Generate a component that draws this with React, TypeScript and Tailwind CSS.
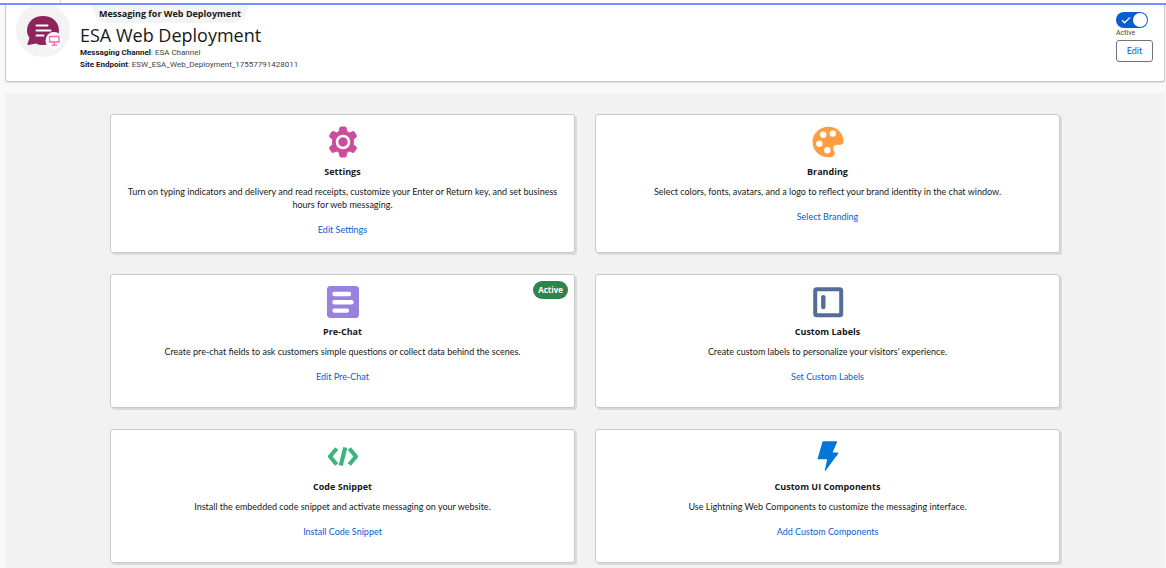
import { useState, type ReactNode } from "react";

type Card = {
  title: string;
  text: string;
  action: string;
  icon: ReactNode;
  active?: boolean;
};

const SettingsIcon = () => (
  <svg viewBox="0 0 32 32" className="size-8" aria-hidden="true">
    <path
      d="M14 1h4q1 0 1.200 1l.6 3.600q1.400.5 2.600 1.300l3.400-1.300q1-.3 1.500.5l2 3.400q.5.900-.3 1.600L26.200 13.400q.3 1.300.3 2.600t-.3 2.600l2.800 2.300q.8.700.3 1.600l-2 3.400q-.5.800-1.500.5l-3.400-1.300q-1.200.8-2.600 1.300L19.200 30q-.2 1-1.200 1h-4q-1 0-1.200-1l-.6-3.600q-1.400-.5-2.600-1.300l-3.400 1.300q-1 .3-1.500-.5l-2-3.400q-.5-.9.3-1.600l2.800-2.300q-.3-1.300-.3-2.600t.3-2.600L3 11.100q-.8-.7-.3-1.600l2-3.400q.5-.8 1.500-.5l3.400 1.300q1.200-.8 2.600-1.300L12.800 2q.2-1 1.200-1z"
      fill="#cb4d9b"
      stroke="#cb4d9b"
    />
    <circle cx="16" cy="16" r="6" fill="#cb4d9b" stroke="#fff" strokeWidth="2.600" />
  </svg>
);

const PaletteIcon = () => (
  <svg viewBox="0 0 32 32" className="size-8" aria-hidden="true">
    <path
      d="M16.500.7C7.500.7.5 7.500.5 16s7 15.300 16 15.300c3.500 0 6.200-1.300 6.200-3.900 0-2-1.500-3-1.500-5.100 0-2.300 1.700-3.600 4-3.600h3.300c2 0 3-1.200 3-3.200C31.500 7.300 25 .7 16.500.7z"
      fill="#ff9d40"
    />
    <g fill="#fff">
      <circle cx="11.200" cy="8.800" r="3.200" />
      <circle cx="20.800" cy="7.600" r="3.200" />
      <circle cx="7.300" cy="17.800" r="3.200" />
      <circle cx="15.300" cy="24.300" r="3.200" />
    </g>
  </svg>
);

const FormIcon = () => (
  <svg viewBox="0 0 32 32" className="size-8" aria-hidden="true">
    <rect width="32" height="32" rx="3.500" fill="#9782df" />
    <g stroke="#fff" strokeWidth="4.400" strokeLinecap="round">
      <path d="M7.500 8h14.500M7.500 16.300h17M7.500 24.600h12.500" />
    </g>
  </svg>
);

const LabelsIcon = () => (
  <svg viewBox="0 0 32 32" className="size-8" fill="none" stroke="#546c96" aria-hidden="true">
    <rect x="3.200" y="3.200" width="26" height="26" rx="1.500" strokeWidth="4" />
    <path d="M11.300 11.300v9.700" strokeWidth="4.400" strokeLinecap="round" />
  </svg>
);

const CodeIcon = () => (
  <svg viewBox="0 0 32 32" className="size-8" fill="none" stroke="#3bb57f" strokeWidth="4.200" aria-hidden="true">
    <path d="M9.700 7.500 3 15.500l6.700 8M22.300 7.500l6.700 8-6.700 8M18.300 6.500l-4.600 18" strokeLinejoin="round" />
  </svg>
);

const BoltIcon = () => (
  <svg viewBox="0 0 32 32" className="size-8" aria-hidden="true">
    <path
      d="M11.200.2h13.200q1 0 .6 1L20.600 11.500h5.200q1 0 .5.900L13.700 29.500q-1.200 1.200-.9-.4l2.400-10.800H6.400q-1 0-.7-1L10.400.9q.2-.7.8-.7z"
      fill="#0176d9"
    />
  </svg>
);

const MessagingIcon = () => (
  <svg viewBox="0 0 54 54" className="size-[54px] shrink-0" aria-hidden="true">
    <circle cx="27" cy="27" r="27" fill="#f3f3f3" />
    <path
      d="M27 13c9.300 0 16 6 16 14.500S36.300 42 27 42c-3 0-5-.5-7-1.500L12.500 42q-1.500.2-1-1.200l2-5.800C12 32.800 11 30.500 11 27.500 11 19 17.700 13 27 13z"
      fill="#8f245c"
    />
    <path d="M20.500 22.500h11M20.500 27.500h14M20.500 32.500h7" stroke="#fff" strokeWidth="2" strokeLinecap="round" />
    <circle cx="38" cy="37.500" r="8.500" fill="#fff" />
    <path d="M33.500 33.500h9.500v5.500h-9.500zM38.200 39v3M35.500 42.200h5.500" fill="none" stroke="#ec6aad" strokeWidth="1.300" />
  </svg>
);

const cards: Card[] = [
  {
    title: "Settings",
    text: "Turn on typing indicators and delivery and read receipts, customize your Enter or Return key, and set business hours for web messaging.",
    action: "Edit Settings",
    icon: <SettingsIcon />,
  },
  {
    title: "Branding",
    text: "Select colors, fonts, avatars, and a logo to reflect your brand identity in the chat window.",
    action: "Select Branding",
    icon: <PaletteIcon />,
  },
  {
    title: "Pre-Chat",
    text: "Create pre-chat fields to ask customers simple questions or collect data behind the scenes.",
    action: "Edit Pre-Chat",
    icon: <FormIcon />,
    active: true,
  },
  {
    title: "Custom Labels",
    text: "Create custom labels to personalize your visitors' experience.",
    action: "Set Custom Labels",
    icon: <LabelsIcon />,
  },
  {
    title: "Code Snippet",
    text: "Install the embedded code snippet and activate messaging on your website.",
    action: "Install Code Snippet",
    icon: <CodeIcon />,
  },
  {
    title: "Custom UI Components",
    text: "Use Lightning Web Components to customize the messaging interface.",
    action: "Add Custom Components",
    icon: <BoltIcon />,
  },
];

function SetupCard({ title, text, action, icon, active }: Card) {
  return (
    <section className="relative flex min-h-[134px] flex-col items-center rounded-[3px] border border-[#c9c9c9] bg-white px-4 pt-[11px] pb-4 text-center shadow-[2px_2px_0_#dadada]">
      {active && (
        <span className="absolute top-1.5 right-1.5 rounded-full bg-[#2e844a] px-[5px] text-[8px] leading-[18px] font-bold text-white">
          Active
        </span>
      )}
      {icon}
      <h2 className="mt-1.5 text-[9px] leading-[15px] font-bold">{title}</h2>
      <p className="mt-1.5 font-['Lato',sans-serif] text-[9px] leading-[13px]">{text}</p>
      <a href="#" className="mt-3 font-['Lato',sans-serif] text-[9px] leading-[13px] text-[#0b5cd0]">
        {action}
      </a>
    </section>
  );
}

export default function App() {
  const [enabled, setEnabled] = useState(true);

  return (
    <div className="h-screen overflow-hidden bg-[#f9f9f9] font-['Open_Sans','Noto_Sans',sans-serif] text-[#181818]">
      <div className="h-[5px] border-b-2 border-[#7b8ff7] bg-white">
        <div className="h-[3px] w-[61px] border-r border-[#d8d8d8]" />
      </div>
      <header className="mr-px ml-[5px] flex h-[77px] items-start rounded-b-[3px] border border-t-0 border-[#c9c9c9] bg-white pr-[11px] pl-2.5 shadow-[0_1px_1px_#dddddd]">
        <div className="h-[52px] overflow-hidden">
          <div className="-mt-0.5">
            <MessagingIcon />
          </div>
        </div>
        <div className="ml-2.5 flex flex-col items-start">
          <p className="ml-3 rounded-b-full bg-[#f3f3f3] px-[7px] text-[9px] leading-[18px] font-bold">
            Messaging for Web Deployment
          </p>
          <h1 className="text-[18px] leading-6">ESA Web Deployment</h1>
          <p className="font-['Roboto',sans-serif] text-[8px] leading-3 text-[#444444]">
            <strong className="text-[#181818]">Messaging Channel</strong>: ESA Channel
          </p>
          <p className="font-['Roboto',sans-serif] text-[8px] leading-3 text-[#444444]">
            <strong className="text-[#181818]">Site Endpoint</strong>: ESW_ESA_Web_Deployment_17557791428011
          </p>
        </div>
        <div className="ml-auto flex flex-col items-start pt-[7px]">
          <label className="flex cursor-pointer flex-col items-start">
            <input
              type="checkbox"
              role="switch"
              className="peer sr-only"
              checked={enabled}
              onChange={(e) => setEnabled(e.target.checked)}
            />
            <span className="flex h-4 w-8 items-center justify-between rounded-full bg-[#0b5cd0] px-px peer-focus-visible:outline">
              <svg viewBox="0 0 10 10" className="ml-1 size-2.5" fill="none" stroke="#fff" aria-hidden="true">
                <path d="M1 5.200l2.600 2.600L9 2.400" strokeWidth="1.300" />
              </svg>
              <span className="size-3.5 rounded-full bg-white" />
            </span>
            <span className="font-['Roboto',sans-serif] text-[7px] leading-[10px] text-[#444444]">Active</span>
          </label>
          <button
            type="button"
            className="mt-0.5 h-[22px] w-[37px] rounded-[3px] border border-[#747474] bg-white font-['Lato',sans-serif] text-[9px] text-[#0b5cd0]"
          >
            Edit
          </button>
        </div>
      </header>
      <main className="mt-[11px] mr-px ml-[5px] min-h-full bg-[#f2f2f2] px-[105px] pt-[21px]">
        <div className="grid grid-cols-2 gap-x-5 gap-y-[21px]">
          {cards.map((card) => (
            <SetupCard key={card.title} {...card} />
          ))}
        </div>
      </main>
    </div>
  );
}
